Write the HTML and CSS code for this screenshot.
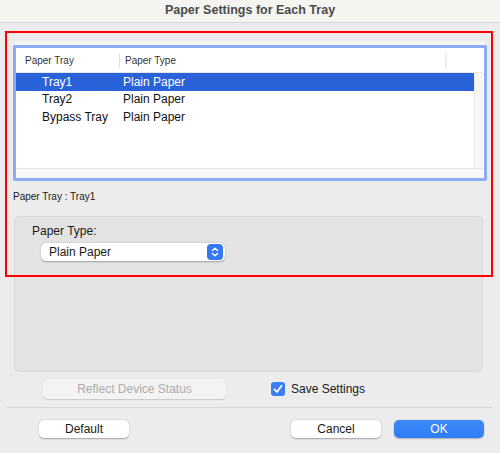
FILE: index.html
```html
<!DOCTYPE html>
<html lang="en">
<head>
<meta charset="utf-8">
<title>Paper Settings for Each Tray</title>
<link rel="stylesheet" href="styles.css">
</head>
<body>
  <div class="titlebar">Paper Settings for Each Tray</div>

  <div class="tableframe">
    <div class="ring">
      <div class="thead">
        <div class="th th-tray">Paper Tray</div>
        <div class="th th-type">Paper Type</div>
        <div class="th th-end"></div>
      </div>
      <div class="tbody">
        <div class="rows">
          <div class="row selected"><span class="c-tray">Tray1</span><span class="c-type">Plain Paper</span></div>
          <div class="row"><span class="c-tray">Tray2</span><span class="c-type">Plain Paper</span></div>
          <div class="row"><span class="c-tray">Bypass Tray</span><span class="c-type">Plain Paper</span></div>
        </div>
        <div class="vscroll"></div>
      </div>
      <div class="hscroll"></div>
    </div>
  </div>

  <div class="current">Paper Tray : Tray1</div>

  <div class="group">
    <div class="group-label">Paper Type:</div>
    <div class="popup">
      <span class="popup-text">Plain Paper</span>
      <svg class="stepper" width="16" height="16" viewBox="0 0 16 16">
        <rect width="16" height="16" rx="4" fill="#3478f6"/>
        <path d="M5.4 6.6 L8 4.2 L10.6 6.6 M5.4 9.4 L8 11.8 L10.6 9.4" stroke="#fff" stroke-width="1.4" fill="none" stroke-linecap="round" stroke-linejoin="round"/>
      </svg>
    </div>
  </div>

  <div class="options">
    <button class="btn btn-disabled reflect" disabled>Reflect Device Status</button>
    <label class="check">
      <svg width="14" height="14" viewBox="0 0 14 14">
        <rect width="14" height="14" rx="3" fill="#3a7ef5"/>
        <path d="M3.4 7.4 L5.9 10 L10.6 3.8" stroke="#fff" stroke-width="1.8" fill="none" stroke-linecap="round" stroke-linejoin="round"/>
      </svg>
      <span>Save Settings</span>
    </label>
  </div>

  <div class="separator"></div>

  <div class="footer">
    <button class="btn default">Default</button>
    <div class="footer-right">
      <button class="btn">Cancel</button>
      <button class="btn btn-primary">OK</button>
    </div>
  </div>

  <div class="highlight"></div>
</body>
</html>
```
FILE: styles.css
```css
* { box-sizing: border-box; }

body {
  margin: 0;
  width: 500px;
  height: 453px;
  background: #ececec;
  font-family: "Liberation Sans", Arial, sans-serif;
  color: #222;
  position: relative;
  overflow: hidden;
}

.titlebar {
  height: 23px;
  padding-bottom: 3px;
  background: #f6f4f1;
  border-bottom: 1px solid #d6d6d6;
  display: flex;
  align-items: center;
  justify-content: center;
  font-size: 12.5px;
  font-weight: bold;
  color: #4a4a4a;
}

/* table view */
.tableframe {
  margin: 18px 15px 0 15px;
  padding-top: 4px;
  background: #f7f7f7;
}

.ring {
  margin: 0 -2px;
  height: 136px;
  border: 3px solid #8eaaf0;
  border-radius: 2px;
  background: #fff;
  display: flex;
  flex-direction: column;
}

.thead {
  height: 25px;
  display: flex;
  align-items: center;
  border-bottom: 1px solid #e4e4e4;
  font-size: 10px;
  color: #333;
  margin-right: 2px;
}

.th { height: 15px; display: flex; align-items: center; }
.th-tray { width: 104px; padding-left: 9px; border-right: 1px solid #e0e0e0; }
.th-type { width: 327px; padding-left: 5px; border-right: 2px solid #ececec; }
.th-end { flex: 1; }

.tbody {
  flex: 1;
  display: flex;
}

.rows { width: 458px; }

.row {
  height: 17.5px;
  display: flex;
  align-items: center;
  font-size: 12px;
  color: #111;
}

.row.selected {
  background: #2a62da;
  color: #fff;
}

.c-tray { width: 107px; padding-left: 26px; }
.c-type { flex: 1; }

.vscroll {
  flex: 1;
  background: #f6f6f6;
  border-left: 1px solid #ececec;
}

.hscroll {
  height: 10px;
  background: #f7f7f7;
  border-top: 1px solid #e6e6e6;
}

.current {
  margin: 10px 0 0 13px;
  font-size: 10px;
  line-height: 12px;
  color: #1a1a1a;
}

/* settings group */
.group {
  margin: 13px 17px 0 14px;
  height: 156px;
  background: #e3e3e3;
  border: 1px solid #dadada;
  border-radius: 5px;
  padding: 7px 0 0 17px;
}

.group-label {
  font-size: 12px;
  line-height: 14px;
  color: #1a1a1a;
}

.popup {
  margin: 5px 0 0 9px;
  width: 184px;
  height: 18px;
  background: #fff;
  border-radius: 5px;
  box-shadow: 0 0.5px 1.5px rgba(0, 0, 0, 0.3);
  display: flex;
  align-items: center;
  justify-content: space-between;
  padding: 0 2px 0 8px;
  font-size: 12px;
  color: #1a1a1a;
}

.stepper { display: block; }

/* options row */
.options {
  margin: 7px 0 0 43px;
  height: 20px;
  display: flex;
  align-items: center;
}

.btn {
  height: 18px;
  width: 90px;
  padding: 0;
  border: none;
  border-radius: 5px;
  background: #fff;
  box-shadow: 0 0.5px 1.5px rgba(0, 0, 0, 0.3);
  font-family: inherit;
  font-size: 12px;
  color: #1a1a1a;
}

.reflect {
  width: 183px;
  height: 20px;
}

.btn-disabled {
  background: #f3f3f3;
  color: #adadad;
  box-shadow: 0 0.5px 1px rgba(0, 0, 0, 0.15);
}

.check {
  margin-left: 45px;
  display: flex;
  align-items: center;
  gap: 6px;
  font-size: 12px;
  color: #1a1a1a;
}

.check svg { display: block; }

.separator {
  margin: 8px 8px 0 7px;
  height: 1px;
  background: #d6d6d6;
}

.footer {
  margin: 12px 16px 0 39px;
  display: flex;
  justify-content: space-between;
}

.footer-right {
  display: flex;
  gap: 13px;
}

.btn-primary {
  background: linear-gradient(#3e89f7, #2f7cf6);
  color: #fff;
  box-shadow: 0 0.5px 1.5px rgba(0, 0, 0, 0.25);
}

/* red annotation frame drawn over the upper part of the sheet */
.highlight {
  position: absolute;
  left: 5px;
  top: 31px;
  width: 488px;
  height: 246px;
  border: 2px solid #ff0000;
  pointer-events: none;
}
```
